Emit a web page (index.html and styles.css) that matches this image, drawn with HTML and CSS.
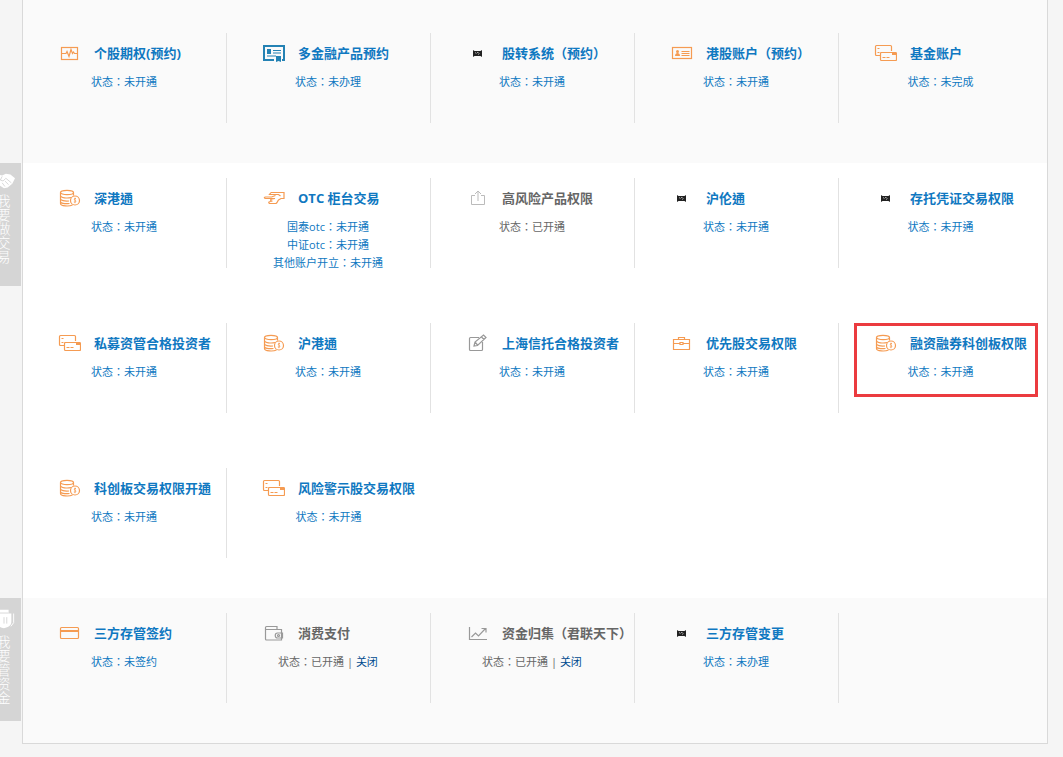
FILE: index.html
```html
<!DOCTYPE html>
<html lang="zh-CN">
  <head>
    <meta charset="UTF-8" />
    <meta name="viewport" content="width=device-width, initial-scale=1.0" />
    <title>业务办理</title>
    <link rel="stylesheet" href="styles.css">
  </head>
  <body>
    <!-- Icon set -->
    <svg class="sprite" aria-hidden="true">
      <symbol id="pulse" viewBox="0 0 24 24">
        <rect x="4.5" y="6.500" width="16" height="12" />
        <path d="M5 12.500h4l1-2 2 5 2-7 1.500 4 1-1.500 1 1.500h3" />
      </symbol>
      <symbol id="certificate" viewBox="0 0 24 24">
        <path d="M13 19H3V5h20v14h-2" stroke-width="2" />
        <path d="M12 9.500h8M12 12h8M6 15h9" />
        <path d="M6 8h4v5H6zM15 15h5v6l-2.500-1L15 21z" fill="currentColor" stroke="none" />
      </symbol>
      <symbol id="mini" viewBox="0 0 24 24">
        <path d="M8 9l1.500 1h6L17 9v7l-1.500-1h-6L8 16z" fill="currentColor" stroke="none" />
        <path d="M10 11.500l1.500 1M12 11.500h1.500M13 13.500l1.500-1" stroke="#aaa" />
      </symbol>
      <symbol id="idcard" viewBox="0 0 24 24">
        <rect x="3.500" y="6.500" width="19" height="11" />
        <circle cx="8.500" cy="10.500" r="1.500" fill="currentColor" stroke="none" />
        <path d="M6 15c0-4 5-4 5 0z" fill="currentColor" stroke="none" />
        <path d="M12.500 10.500h8M12.500 12.500h8M12.500 14.500h8" />
      </symbol>
      <symbol id="cards" viewBox="0 0 24 24">
        <path d="M7 14.500H3.500a1 1 0 0 1-1-1v-8a1 1 0 0 1 1-1h14a1 1 0 0 1 1 1V10" />
        <path d="M4.500 7.500h3M4.500 11.500h11" stroke-dasharray="2 1" />
        <path d="M18 11.500H8.500a1 1 0 0 0-1 1v6a1 1 0 0 0 1 1h14a1 1 0 0 0 1-1v-6a1 1 0 0 0-1-1z" />
        <path d="M9.500 16.500h8" stroke-dasharray="3 1" />
        <path d="M19 11h4v3h-4z" fill="currentColor" stroke="none" />
      </symbol>
      <symbol id="coins" viewBox="0 0 24 24">
        <ellipse cx="10" cy="6.500" rx="6.500" ry="2.200" />
        <path d="M3.500 6.500v11c0 3 9 3 12 1.500M16.500 6.500v3M3.500 9.500c0 2.500 7 3 10.500 2M3.500 12.500c0 2 4 3 8.500 2.500M3.500 15.500c0 2 4 2.500 9 2" />
        <circle cx="18" cy="14.500" r="4.500" />
        <path d="M19 12.500c-2-.5-2.500 1-1 1.700s1 2.300-1.200 1.800M18 11.700v5.500" stroke-width=".8" />
      </symbol>
      <symbol id="hand" viewBox="0 0 24 24">
        <path d="M10 6.500h13v6h-3l-2.500 1.500c-1 1-1 2.500-2.500 3.500H8.500c-1.500-1-.5-2 1-2l2-.5c-2 .3-3-1.500-.5-2l3-.5H4.500c-2-.5-1-1.500 0-1.500h6l4-1.500" />
        <path d="M10 6.500L8.500 8.500h9l2 1.500" />
      </symbol>
      <symbol id="share" viewBox="0 0 24 24">
        <path d="M10 9.500H6.500v9h13v-9H16M13 15V5M10 8l3-3 3 3" />
      </symbol>
      <symbol id="edit" viewBox="0 0 24 24">
        <path d="M14 6.500H5.500a1 1 0 0 0-1 1v11a1 1 0 0 0 1 1h11a1 1 0 0 0 1-1V11" />
        <path d="M9 15l1-4L18.500 4l2.500 2.500-8.500 8zM16.500 6l2.500 2.500M10 11l2.500 3" />
      </symbol>
      <symbol id="briefcase" viewBox="0 0 24 24">
        <path d="M4.500 8.500h16v10h-16zM9.500 8.500v-2h6v2M4.500 12.500h6.500M14 12.500h6.500M11 11.500h3v2h-3z" />
      </symbol>
      <symbol id="card" viewBox="0 0 24 24">
        <rect x="3.500" y="6.500" width="18" height="11" rx="1" />
        <path d="M3.500 10h18" stroke-width="2" />
      </symbol>
      <symbol id="wallet" viewBox="0 0 24 24">
        <path d="M4.500 8V6.500a1 1 0 0 1 1-1h10.500v3M4.500 8.500h16v10.500h-15a1 1 0 0 1-1-1zM20.500 12h-4c-3 0-3 5 0 5h5v-5z" />
        <circle cx="17.500" cy="14.500" r="1" />
      </symbol>
      <symbol id="chart" viewBox="0 0 24 24">
        <path d="M4.500 6v12.500H22M6.500 16l4-4 3 3 7-7.500M16.500 7.500h4.500v4" />
      </symbol>
      <symbol id="shake" viewBox="0 0 24 16">
        <path d="M0 4l6-3 4 1 4-2 5 1 5 4-3 6-5 4-4 1-3-2-5-3-4-3z" fill="currentColor" stroke="none" />
        <path d="M10 3L8 7l3 1 3-3 6 5M13 8l4 4M10 10l3 4" stroke="#d5d5d5" />
      </symbol>
      <symbol id="purse" viewBox="0 0 24 22">
        <path d="M7 1h10v4h3v9c0 4-3 6-8 7-5-1-8-3-8-7V5h3z" fill="currentColor" stroke="none" />
        <path d="M7 4.500h10M12 9v7M15 9v7" stroke="#d5d5d5" />
        <path d="M22.500 5v10l-3 4" />
      </symbol>
    </svg>

    <main class="panel">
      <section class="group group-first">
        <div class="item">
          <h3 class="title"><svg class="icon orange"><use href="#pulse" /></svg><a href="#">个股期权(预约)</a></h3>
          <p class="status">状态：未开通</p>
        </div>
        <div class="item">
          <h3 class="title"><svg class="icon blue"><use href="#certificate" /></svg><a href="#">多金融产品预约</a></h3>
          <p class="status">状态：未办理</p>
        </div>
        <div class="item">
          <h3 class="title"><svg class="icon black"><use href="#mini" /></svg><a href="#">股转系统（预约）</a></h3>
          <p class="status">状态：未开通</p>
        </div>
        <div class="item">
          <h3 class="title"><svg class="icon orange"><use href="#idcard" /></svg><a href="#">港股账户（预约）</a></h3>
          <p class="status">状态：未开通</p>
        </div>
        <div class="item">
          <h3 class="title"><svg class="icon orange"><use href="#cards" /></svg><a href="#">基金账户</a></h3>
          <p class="status">状态：未完成</p>
        </div>
      </section>

      <section class="group group-white">
        <div class="tab">
          <svg class="tab-icon"><use href="#shake" /></svg>
          <span class="tab-text">我要做交易</span>
        </div>
        <div class="item">
          <h3 class="title"><svg class="icon orange"><use href="#coins" /></svg><a href="#">深港通</a></h3>
          <p class="status">状态：未开通</p>
        </div>
        <div class="item">
          <h3 class="title"><svg class="icon orange"><use href="#hand" /></svg><a href="#">OTC 柜台交易</a></h3>
          <p class="status">国泰otc：未开通</p>
          <p class="status">中证otc：未开通</p>
          <p class="status">其他账户开立：未开通</p>
        </div>
        <div class="item done">
          <h3 class="title"><svg class="icon silver"><use href="#share" /></svg>高风险产品权限</h3>
          <p class="status">状态：已开通</p>
        </div>
        <div class="item">
          <h3 class="title"><svg class="icon black"><use href="#mini" /></svg><a href="#">沪伦通</a></h3>
          <p class="status">状态：未开通</p>
        </div>
        <div class="item">
          <h3 class="title"><svg class="icon black"><use href="#mini" /></svg><a href="#">存托凭证交易权限</a></h3>
          <p class="status">状态：未开通</p>
        </div>
        <div class="item">
          <h3 class="title"><svg class="icon orange"><use href="#cards" /></svg><a href="#">私募资管合格投资者</a></h3>
          <p class="status">状态：未开通</p>
        </div>
        <div class="item">
          <h3 class="title"><svg class="icon orange"><use href="#coins" /></svg><a href="#">沪港通</a></h3>
          <p class="status">状态：未开通</p>
        </div>
        <div class="item">
          <h3 class="title"><svg class="icon gray"><use href="#edit" /></svg><a href="#">上海信托合格投资者</a></h3>
          <p class="status">状态：未开通</p>
        </div>
        <div class="item">
          <h3 class="title"><svg class="icon orange"><use href="#briefcase" /></svg><a href="#">优先股交易权限</a></h3>
          <p class="status">状态：未开通</p>
        </div>
        <div class="item marked">
          <h3 class="title"><svg class="icon orange"><use href="#coins" /></svg><a href="#">融资融券科创板权限</a></h3>
          <p class="status">状态：未开通</p>
        </div>
        <div class="item">
          <h3 class="title"><svg class="icon orange"><use href="#coins" /></svg><a href="#">科创板交易权限开通</a></h3>
          <p class="status">状态：未开通</p>
        </div>
        <div class="item last">
          <h3 class="title"><svg class="icon orange"><use href="#cards" /></svg><a href="#">风险警示股交易权限</a></h3>
          <p class="status">状态：未开通</p>
        </div>
      </section>

      <section class="group">
        <div class="tab">
          <svg class="tab-icon tall"><use href="#purse" /></svg>
          <span class="tab-text">我要管资金</span>
        </div>
        <div class="item">
          <h3 class="title"><svg class="icon orange"><use href="#card" /></svg><a href="#">三方存管签约</a></h3>
          <p class="status">状态：未签约</p>
        </div>
        <div class="item done">
          <h3 class="title"><svg class="icon gray"><use href="#wallet" /></svg>消费支付</h3>
          <p class="status">状态：已开通 | <a class="close" href="#">关闭</a></p>
        </div>
        <div class="item done">
          <h3 class="title"><svg class="icon gray"><use href="#chart" /></svg>资金归集（君联天下）</h3>
          <p class="status">状态：已开通 | <a class="close" href="#">关闭</a></p>
        </div>
        <div class="item">
          <h3 class="title"><svg class="icon black"><use href="#mini" /></svg><a href="#">三方存管变更</a></h3>
          <p class="status">状态：未办理</p>
        </div>
      </section>
    </main>
  </body>
</html>
```
FILE: styles.css
```css
body {
  margin: 0;
  background-color: #f5f5f5;
  font-family: "Open Sans", "Noto Sans CJK SC", sans-serif;
  overflow-x: hidden;
}

a {
  color: inherit;
  text-decoration: none;
}

a:hover {
  text-decoration: underline;
}

.sprite {
  position: absolute;
  width: 0;
  height: 0;
}

.panel {
  margin: 0 15px 13px 22px;
  border: 1px solid #d9d9d9;
  border-top: none;
}

.group {
  position: relative;
  display: grid;
  grid-template-columns: repeat(5, 1fr);
  row-gap: 55px;
  padding: 15px 4px 40px 0;
  background-color: #fafafa;
}

.group-first {
  padding-top: 33px;
}

.group-white {
  background-color: #fff;
}

/* traditional locale centres the full-width colon and brackets */
.item {
  position: relative;
  height: 90px;
  min-width: 0;
  box-sizing: border-box;
  border-right: 1px solid #e2e2e2;
  color: #0f78c1;
  font-family: "Open Sans", "Noto Sans CJK TC", sans-serif;
  -webkit-locale: "zh-TW";
}

.group-first .item:last-child,
.group-white .item:nth-of-type(5n + 1),
.item.last {
  border-right: none;
}

.item.done {
  color: #666;
}

.title {
  display: flex;
  align-items: center;
  gap: 13px;
  height: 40px;
  box-sizing: border-box;
  margin: 0;
  padding: 0 0 2px 34px;
  font-size: 13px;
  font-weight: bold;
  white-space: nowrap;
}

.status {
  margin: 0;
  padding-right: 1px;
  font-size: 11px;
  line-height: 18px;
  text-align: center;
}

.close {
  color: #004a8f;
}

.icon {
  flex: none;
  width: 24px;
  height: 24px;
  margin-top: 2px;
}

.icon,
.tab-icon {
  fill: none;
  stroke: currentColor;
}

.orange {
  color: #f59b52;
  stroke-width: 1.2;
}

.blue {
  color: #2482b4;
}

.black {
  color: #222;
}

.gray {
  color: #999;
  stroke-width: 1.2;
}

.silver {
  color: #bbb;
}

/* red frame around the highlighted permission */
.marked::after {
  content: "";
  position: absolute;
  top: 0;
  left: 15px;
  right: 5px;
  height: 68px;
  border: 3px solid #eb3b3f;
  pointer-events: none;
}

.tab {
  position: absolute;
  top: 0;
  left: -37px;
  width: 35px;
  height: 123px;
  box-sizing: border-box;
  padding-top: 10px;
  display: flex;
  flex-direction: column;
  align-items: center;
  gap: 5px;
  background-color: #d5d5d5;
  color: #fff;
}

.tab-icon {
  width: 22px;
  height: 16px;
}

.tab-icon.tall {
  height: 22px;
}

.tab-text {
  width: 14px;
  font-size: 14px;
  font-weight: 300;
  line-height: 14px;
}
```
